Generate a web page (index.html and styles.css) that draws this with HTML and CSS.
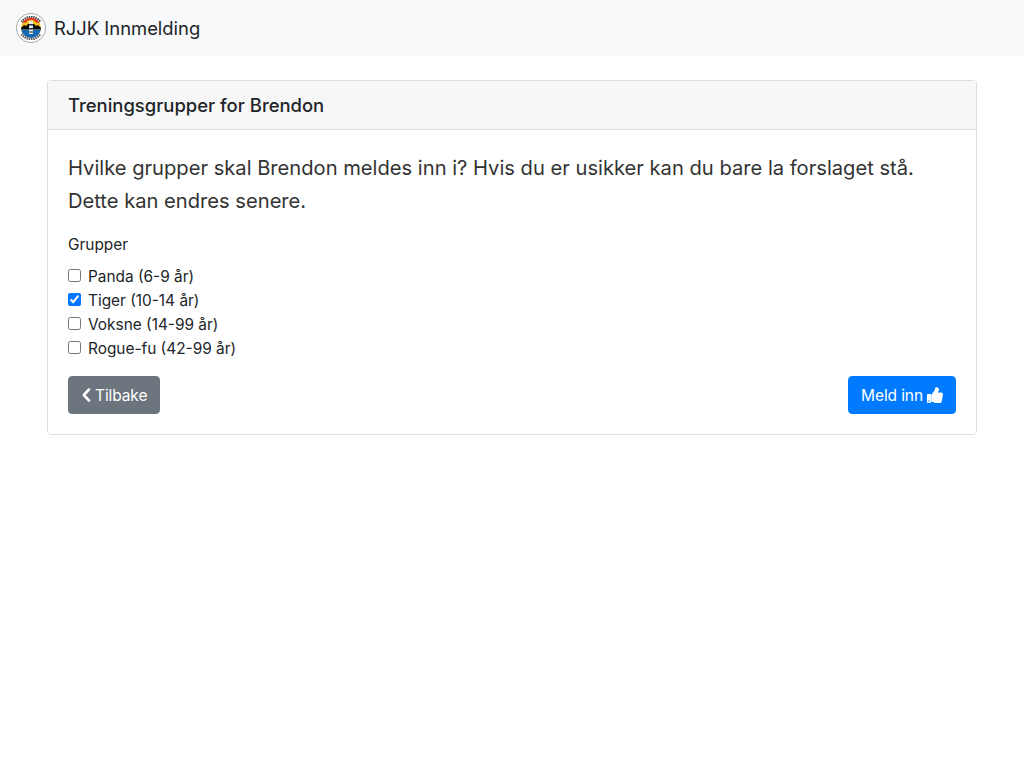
FILE: index.html
```html
<!DOCTYPE html>
<html lang="no">
<head>
  <meta charset="UTF-8">
  <title>RJJK Innmelding</title>
  <link rel="stylesheet" href="styles.css">
</head>
<body>
  <nav class="navbar">
    <a class="brand" href="#">
      <svg class="logo" viewBox="0 0 30 30" width="30" height="30" aria-hidden="true">
        <circle cx="15" cy="15" r="14.6" fill="#fff" stroke="#8f9499" stroke-width=".8"/>
        <path d="M5.500 9A11.500 11.500 0 0 1 24.500 9" fill="none" stroke="#4a4a4a" stroke-width="2.200" stroke-dasharray="1.500 .7"/>
        <path d="M5.500 21A11.500 11.500 0 0 0 24.500 21" fill="none" stroke="#5a5a5a" stroke-width="2.200" stroke-dasharray="1.500 .7"/>
        <circle cx="15" cy="15" r="10" fill="#f8c21d"/>
        <path d="M6.300 10A10 10 0 0 1 23.700 10L20 9.500A6 6 0 0 0 10 9.500z" fill="#e2352a"/>
        <path d="M5 15 8 12l2 1 2-2h6l2 2 2-1 3 3v1.500H5z" fill="#0c0c0c"/>
        <path d="M5.200 16.500h19.600A10 10 0 0 1 15 25a10 10 0 0 1-9.800-8.500z" fill="#1668b5"/>
        <path d="M13 8h4v13h-4z" fill="#e6e9ee"/>
        <path d="M13 11h4v1.500h-4zM13 15h4v1.500h-4zM13 18.500h4v1h-4z" fill="#25303b"/>
      </svg>
      <span>RJJK Innmelding</span>
    </a>
  </nav>

  <main class="container">
    <section class="card">
      <h5 class="card-header">Treningsgrupper for Brendon</h5>
      <div class="card-body">
        <p class="lead">Hvilke grupper skal Brendon meldes inn i? Hvis du er usikker kan du bare la forslaget stå. Dette kan endres senere.</p>
        <form>
          <div class="group-label">Grupper</div>
          <div class="checks">
            <label class="check"><input type="checkbox"> <span>Panda (6-9 år)</span></label>
            <label class="check"><input type="checkbox" checked> <span>Tiger (10-14 år)</span></label>
            <label class="check"><input type="checkbox"> <span>Voksne (14-99 år)</span></label>
            <label class="check"><input type="checkbox"> <span>Rogue-fu (42-99 år)</span></label>
          </div>
          <div class="actions">
            <button type="button" class="btn btn-secondary">
              <svg class="icon-back" viewBox="0 0 10 16" width="10" height="16" aria-hidden="true"><path d="M8 2.500 2.800 8 8 13.500" fill="none" stroke="#fff" stroke-width="2.600" stroke-linecap="round" stroke-linejoin="round"/></svg>
              <span>Tilbake</span>
            </button>
            <button type="button" class="btn btn-primary">
              <span>Meld inn</span>
              <svg class="icon-thumb" viewBox="0 0 512 512" width="16" height="16" aria-hidden="true"><path fill="#fff" d="M104 224H24c-13 0-24 11-24 24v240c0 13 11 24 24 24h80c13 0 24-11 24-24V248c0-13-11-24-24-24zM64 472c-13 0-24-11-24-24s11-24 24-24 24 11 24 24-11 24-24 24zM384 81c0 42-26 66-33 95h102c33 0 59 28 59 59 0 19-8 39-20 52 10 24 9 57-9 81 9 26 0 58-17 76 5 19 2 35-7 48-22 32-77 32-123 32h-3c-52 0-95-19-129-34-17-8-39-17-56-17-7 0-12-5-12-12V247c0-3 1-6 4-9 40-39 57-81 90-114 15-15 20-38 25-60 5-18 14-56 34-56 24 0 95 8 95 73z"/></svg>
            </button>
          </div>
        </form>
      </div>
    </section>
  </main>
</body>
</html>
```

FILE: styles.css
```css
* {box-sizing:border-box}
body {margin:0;font-family:Inter,"Liberation Sans",sans-serif;font-size:16px;line-height:1.5;color:#212529;background:#fff}

.navbar {display:flex;align-items:center;height:56px;padding:0 16px;background:#f8f9fa}
.brand {display:flex;align-items:center;gap:8px;font-size:18.400px;color:#212529;text-decoration:none}
.brand span {padding-top:1px}
.logo {display:block}

.container {max-width:960px;margin:0 auto;padding:24px 15px 0}

.card {border:1px solid #dfdfdf;border-radius:4px;background:#fff}
.card-header {margin:0;height:49px;padding:1px 20px 0;display:flex;align-items:center;font-size:18.450px;font-weight:500;line-height:1.2;background:#f7f7f7;border-bottom:1px solid #dfdfdf}
.card-body {padding:20px}

.lead {margin:0 0 16px;padding-top:1px;font-size:20.150px;line-height:33px;color:#333}
.group-label {margin:-1px 0 7px;padding-top:1px;font-size:15.400px;line-height:24px}

.checks {display:flex;flex-direction:column}
.check {display:flex;align-items:center;gap:7px;height:24px;font-size:15.400px}
.check span {padding-top:1px}
.check input {width:13px;height:13px;margin:-1px 0 0;accent-color:#0075ff}

.actions {display:flex;justify-content:space-between;margin-top:16px}
.btn {display:flex;align-items:center;gap:4px;height:38px;padding:0 12px;border:1px solid transparent;border-radius:4px;font:inherit;font-size:15.500px;letter-spacing:-.1px;color:#fff;cursor:pointer}
.btn span {padding-top:1px}
.btn-secondary {background:#6c757d;border-color:#6c757d}
.btn-primary {background:#007bff;border-color:#007bff}
```
